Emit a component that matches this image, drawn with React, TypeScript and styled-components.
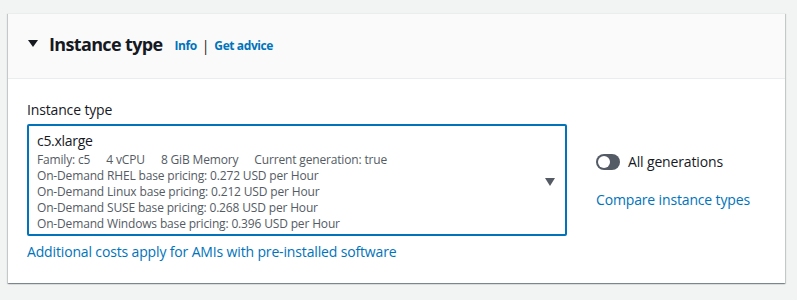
import React from 'react'
import styled, { createGlobalStyle } from 'styled-components'

const GlobalStyle = createGlobalStyle`
  body {
    margin: 0;
    background: #f2f3f3;
    font-family: 'Open Sans', 'Liberation Sans', sans-serif;
    color: #16191f;
    letter-spacing: -0.15px;
  }
`

const details = [
  'On-Demand RHEL base pricing: 0.272 USD per Hour',
  'On-Demand Linux base pricing: 0.212 USD per Hour',
  'On-Demand SUSE base pricing: 0.268 USD per Hour',
  'On-Demand Windows base pricing: 0.396 USD per Hour',
]

export default function App() {
  return (
    <>
      <GlobalStyle />
      <S_Page>
        <S_Card>
          <S_Header>
            <S_Caret viewBox="0 0 10 7">
              <path d="M0 0 H10 L5 7 Z" fill="#16191f" />
            </S_Caret>
            <S_Title>Instance type</S_Title>
            <S_HeaderLinks>
              <S_SmallLink>Info</S_SmallLink>
              <S_Pipe>|</S_Pipe>
              <S_SmallLink>Get advice</S_SmallLink>
            </S_HeaderLinks>
          </S_Header>
          <S_Body>
            <S_Field>
              <S_Label>Instance type</S_Label>
              <S_Select>
                <S_SelectText>
                  <S_Value>c5.xlarge</S_Value>
                  <S_Tags>
                    <span>Family: c5</span>
                    <span>4 vCPU</span>
                    <span>8 GiB Memory</span>
                    <span>Current generation: true</span>
                  </S_Tags>
                  {details.map((d, i) => (
                    <S_Detail key={i}>{d}</S_Detail>
                  ))}
                </S_SelectText>
                <S_SelectCaret viewBox="0 0 10 8">
                  <path d="M0 0 H10 L5 8 Z" fill="#545b64" />
                </S_SelectCaret>
              </S_Select>
              <S_Link $top={5}>Additional costs apply for AMIs with pre-installed software</S_Link>
            </S_Field>
            <S_Side>
              <S_ToggleRow>
                <S_Toggle>
                  <S_Knob />
                </S_Toggle>
                <span>All generations</span>
              </S_ToggleRow>
              <S_Link $top={0}>Compare instance types</S_Link>
            </S_Side>
          </S_Body>
        </S_Card>
      </S_Page>
    </>
  )
}

const S_Page = styled.div`
  padding: 13px 12px 17px 8px;
`

const S_Card = styled.div`
  background: #ffffff;
  border-top: 1px solid #eaeded;
  box-shadow: 0 1px 1px 0 rgba(0, 28, 36, 0.3), 1px 1px 1px 0 rgba(0, 28, 36, 0.15),
    -1px 1px 1px 0 rgba(0, 28, 36, 0.15);
`

const S_Header = styled.div`
  display: flex;
  align-items: center;
  height: 60px;
  padding: 0 20px 4px;
  background: #fafafa;
  border-bottom: 1px solid #eaeded;
`

const S_Caret = styled.svg`
  width: 10px;
  height: 7px;
  margin: 0 11px 1px 0;
`

const S_Title = styled.h2`
  margin: 0 12px 0 0;
  font-size: 18px;
  font-weight: 700;
  line-height: 22px;
  letter-spacing: -0.65px;
`

const S_HeaderLinks = styled.div`
  display: flex;
  align-items: center;
  gap: 5px;
  font-size: 12px;
  padding-top: 3px;
`

const S_SmallLink = styled.a`
  color: #0073bb;
  font-weight: 700;
  letter-spacing: -0.4px;
`

const S_Pipe = styled.span`
  font-size: 14px;
  color: #16191f;
`

const S_Body = styled.div`
  display: flex;
  padding: 20px 20px 20px 19px;
  gap: 29px;
`

const S_Field = styled.div`
  display: flex;
  flex-direction: column;
  width: 540px;
`

const S_Label = styled.label`
  font-size: 14px;
  line-height: 22px;
  margin-bottom: 3px;
`

const S_Select = styled.div`
  display: flex;
  align-items: center;
  border: 2px solid #0073bb;
  border-radius: 2px;
  padding: 4px 10px 2px 8px;
`

const S_SelectText = styled.div`
  flex: 1;
`

const S_Value = styled.div`
  font-size: 14px;
  line-height: 22px;
  letter-spacing: -0.3px;
`

const S_Tags = styled.div`
  display: flex;
  gap: 16px;
  font-size: 12px;
  line-height: 16px;
  color: #545b64;
  letter-spacing: -0.16px;
`

const S_Detail = styled.div`
  font-size: 12px;
  line-height: 16px;
  color: #545b64;
  letter-spacing: -0.16px;
`

const S_SelectCaret = styled.svg`
  width: 10px;
  height: 8px;
  margin-top: 2px;
`

const S_Link = styled.a<{ $top: number }>`
  font-size: 14px;
  line-height: 22px;
  color: #0073bb;
  margin-top: ${p => p.$top}px;
`

const S_Side = styled.div`
  display: flex;
  flex-direction: column;
  padding-top: 52px;
  gap: 16px;
`

const S_ToggleRow = styled.div`
  display: flex;
  align-items: center;
  gap: 8px;
  font-size: 14px;
  line-height: 22px;
`

const S_Toggle = styled.div`
  display: flex;
  align-items: center;
  width: 24px;
  height: 16px;
  border-radius: 8px;
  background: #545b64;
  padding: 0 2px;
  box-sizing: border-box;
`

const S_Knob = styled.div`
  width: 12px;
  height: 12px;
  border-radius: 50%;
  background: #ffffff;
`
